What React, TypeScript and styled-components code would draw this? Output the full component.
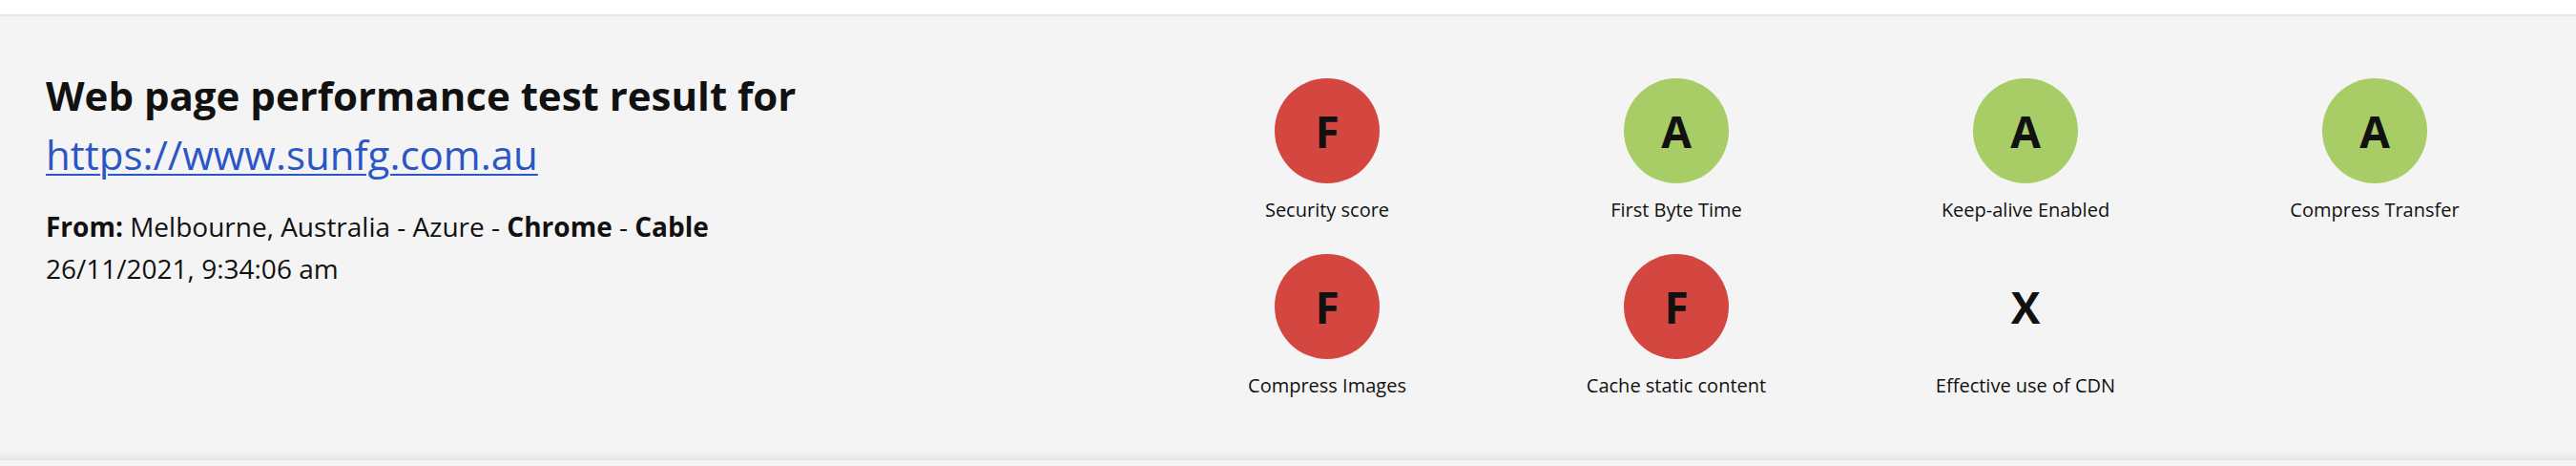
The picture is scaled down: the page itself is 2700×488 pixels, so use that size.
import React from "react";
import styled, { createGlobalStyle } from "styled-components";

const GlobalStyle = createGlobalStyle`
  html, body {
    margin: 0;
    padding: 0;
    background: #ffffff;
  }
  body {
    font-family: "Open Sans", "Noto Sans", Arial, sans-serif;
    color: #111111;
  }
`;

const Page = styled.div`
  display: flex;
  flex-direction: column;
  min-height: 488px;
  background: #f3f3f3;
`;

const TopBar = styled.div`
  height: 15px;
  background: #ffffff;
  border-bottom: 2px solid #e6e6e6;
`;

const Panel = styled.section`
  display: flex;
  align-items: flex-start;
  background: #f4f4f4;
  padding: 52px 28px 62px 48px;
  box-shadow: inset 0 -12px 10px -10px rgba(0, 0, 0, 0.07);
  border-bottom: 1px solid #e2e2e2;
`;

const Summary = styled.div`
  flex: 1;
  min-width: 0;
`;

const Title = styled.h1`
  margin: 0;
  font-size: 42px;
  line-height: 62px;
  font-weight: 700;
  color: #111111;
`;

const UrlLink = styled.a`
  display: block;
  font-size: 42px;
  line-height: 62px;
  font-weight: 400;
  color: #2a56c6;
  text-decoration: underline;
  text-decoration-thickness: 2px;
  text-underline-offset: 4px;
  width: max-content;
`;

const Meta = styled.div`
  margin-top: 22px;
  font-size: 28px;
  line-height: 44px;
  color: #111111;
`;

const Strong = styled.strong`
  font-weight: 700;
`;

const Grades = styled.div`
  display: grid;
  grid-template-columns: repeat(4, 366px);
  row-gap: 31px;
  margin-top: 13px;
`;

const GradeCell = styled.div`
  display: flex;
  flex-direction: column;
  align-items: center;
`;

const GradeBadge = styled.div<{ $tone: "fail" | "pass" | "none" }>`
  width: 110px;
  height: 110px;
  border-radius: 50%;
  display: flex;
  align-items: center;
  justify-content: center;
  font-size: 46px;
  font-weight: 700;
  color: #111111;
  background: ${({ $tone }) =>
    $tone === "fail" ? "#d44640" : $tone === "pass" ? "#a8cd66" : "transparent"};
`;

const GradeLabel = styled.div`
  margin-top: 13px;
  font-size: 20px;
  line-height: 30px;
  color: #111111;
  white-space: nowrap;
`;

const Below = styled.div`
  flex: 1;
  background: #f3f3f3;
`;

type Grade = { letter: string; label: string; tone: "fail" | "pass" | "none" };

const grades: Grade[] = [
  { letter: "F", label: "Security score", tone: "fail" },
  { letter: "A", label: "First Byte Time", tone: "pass" },
  { letter: "A", label: "Keep-alive Enabled", tone: "pass" },
  { letter: "A", label: "Compress Transfer", tone: "pass" },
  { letter: "F", label: "Compress Images", tone: "fail" },
  { letter: "F", label: "Cache static content", tone: "fail" },
  { letter: "X", label: "Effective use of CDN", tone: "none" },
];

export default function App() {
  return (
    <Page>
      <GlobalStyle />
      <TopBar />
      <Panel>
        <Summary>
          <Title>Web page performance test result for</Title>
          <UrlLink href="#">https://www.sunfg.com.au</UrlLink>
          <Meta>
            <Strong>From:</Strong> Melbourne, Australia - Azure - <Strong>Chrome</Strong> -{" "}
            <Strong>Cable</Strong>
            <br />
            26/11/2021, 9:34:06 am
          </Meta>
        </Summary>
        <Grades>
          {grades.map((g) => (
            <GradeCell key={g.label}>
              <GradeBadge $tone={g.tone}>{g.letter}</GradeBadge>
              <GradeLabel>{g.label}</GradeLabel>
            </GradeCell>
          ))}
        </Grades>
      </Panel>
      <Below />
    </Page>
  );
}
